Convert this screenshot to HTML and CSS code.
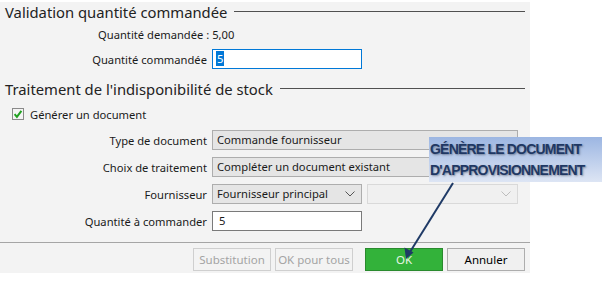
FILE: index.html
```html
<!DOCTYPE html>
<html lang="fr">
<head>
    <meta charset="UTF-8">
    <title>Validation quantité commandée</title>
    <link rel="stylesheet" href="styles.css">
</head>
<body>
    <div class="panel">
        <div class="section-title">
            <span>Validation quantité commandée</span>
            <div class="rule"></div>
        </div>
        <div class="info">Quantité demandée : 5,00</div>
        <div class="row row-first">
            <label class="lbl">Quantité commandée</label>
            <div class="field input focus"><span class="sel">5</span></div>
        </div>

        <div class="section-title second">
            <span>Traitement de l'indisponibilité de stock</span>
            <div class="rule"></div>
        </div>
        <div class="check-row">
            <svg class="checkbox" width="12" height="12" viewBox="0 0 12 12">
                <rect x="0.5" y="0.5" width="11" height="11" fill="#f4f4f4" stroke="#8a8a8a"/>
                <path d="M2.6 6.2 L4.9 8.8 L9.4 2.8" fill="none" stroke="#21a121" stroke-width="2"/>
            </svg>
            <span>Générer un document</span>
        </div>

        <div class="rows">
            <div class="row">
                <label class="lbl">Type de document</label>
                <div class="field readonly wide">Commande fournisseur</div>
            </div>
            <div class="row">
                <label class="lbl">Choix de traitement</label>
                <div class="field readonly wide">Compléter un document existant</div>
            </div>
            <div class="row">
                <label class="lbl">Fournisseur</label>
                <div class="field combo">
                    <span>Fournisseur principal</span>
                    <svg width="10" height="6" viewBox="0 0 10 6"><path d="M0.5 0.5 L5 5 L9.5 0.5" fill="none" stroke="#555" stroke-width="1"/></svg>
                </div>
                <div class="field combo disabled">
                    <span></span>
                    <svg width="10" height="6" viewBox="0 0 10 6"><path d="M0.5 0.5 L5 5 L9.5 0.5" fill="none" stroke="#bdbdbd" stroke-width="1"/></svg>
                </div>
            </div>
            <div class="row">
                <label class="lbl">Quantité à commander</label>
                <div class="field input">5</div>
            </div>
        </div>

        <div class="footer">
            <button class="btn off">Substitution</button>
            <button class="btn off">OK pour tous</button>
            <button class="btn ok">OK</button>
            <button class="btn">Annuler</button>
        </div>
    </div>

    <div class="callout">
        <div>GÉNÈRE LE DOCUMENT</div>
        <div>D'APPROVISIONNEMENT</div>
    </div>
    <svg class="arrow" width="602" height="285" viewBox="0 0 602 285">
        <line x1="453" y1="183" x2="410" y2="252" stroke="#1f3a66" stroke-width="2"/>
        <path d="M406 259 L404.5 247.5 L413.5 252.5 Z" fill="#1f3a66"/>
    </svg>
</body>
</html>
```

FILE: styles.css
```css
* {
    margin: 0;
    padding: 0;
    box-sizing: border-box;
}

body {
    background: #ffffff;
    font-family: "Noto Sans", "Open Sans", sans-serif;
    font-size: 11.2px;
    color: #1a1a1a;
    position: relative;
    width: 602px;
    height: 285px;
    overflow: hidden;
}

.panel {
    margin-top: 2px;
    width: 530px;
    height: 271px;
    background: #f3f3f3;
    display: flex;
    flex-direction: column;
}

.section-title {
    display: flex;
    align-items: center;
    gap: 7px;
    height: 20px;
    padding: 0 5px 0 5px;
    font-size: 14.8px;
    color: #222;
}

.section-title .rule {
    flex: 1;
    height: 1px;
    background: #505050;
    margin-top: -1px;
}

.section-title.second {
    margin-top: 10px;
}

.info {
    margin-top: 5px;
    padding-left: 98px;
    height: 16px;
    line-height: 16px;
}

.row {
    display: flex;
    align-items: center;
    gap: 5px;
    height: 20px;
}

.row-first {
    margin-top: 6px;
}

.lbl {
    width: 207px;
    text-align: right;
    white-space: nowrap;
}

.field {
    height: 20px;
    line-height: 18px;
    padding: 0 4px;
    border: 1px solid #adadad;
    white-space: nowrap;
}

.input {
    width: 150px;
    background: #fff;
    border-color: #7a7a7a;
    padding-left: 6px;
}

.input.focus {
    border-color: #0078d7;
    padding-left: 3px;
}

.sel {
    background: #0078d7;
    color: #fff;
    padding: 0 1px;
}

.readonly {
    background: #e5e5e5;
}

.wide {
    width: 306px;
}

.combo {
    width: 150px;
    background: #e5e5e5;
    display: flex;
    align-items: center;
    justify-content: space-between;
    padding-right: 6px;
}

.combo.disabled {
    width: 151px;
    background: #f0f0f0;
    border-color: #d9d9d9;
}

.check-row {
    display: flex;
    align-items: center;
    gap: 6px;
    height: 16px;
    margin-top: 7px;
    padding-left: 12px;
}

.rows {
    display: flex;
    flex-direction: column;
    gap: 7px;
    margin-top: 8px;
}

.footer {
    margin-top: 11px;
    border-top: 1px solid #a5a5a5;
    display: flex;
    justify-content: flex-end;
    gap: 4px;
    padding: 5px 5px 0 0;
}

.btn {
    width: 78px;
    height: 23px;
    font-family: inherit;
    font-size: 11.5px;
    background: #f0f0f0;
    border: 1px solid #adadad;
    color: #000;
}

.btn.off {
    color: #a3a3a3;
    border-color: #cfcfcf;
    background: #f3f3f3;
}

.btn.ok {
    margin-left: 8px;
    background: #33b23a;
    border-color: #2a8a2e;
    color: #e6f5e6;
}

.callout {
    position: absolute;
    left: 429px;
    top: 137px;
    width: 173px;
    height: 45px;
    padding: 2px 0 0 1px;
    background: linear-gradient(#9cb6e2, #dde5f4);
    font-family: "Liberation Sans Narrow", "Liberation Sans", sans-serif;
    font-stretch: condensed;
    font-weight: bold;
    font-size: 14px;
    line-height: 21px;
    letter-spacing: -0.8px;
    color: #1f3864;
    text-shadow: 1px 1px 2px rgba(60, 70, 90, 0.55);
}

.arrow {
    position: absolute;
    left: 0;
    top: 0;
    pointer-events: none;
}
```
